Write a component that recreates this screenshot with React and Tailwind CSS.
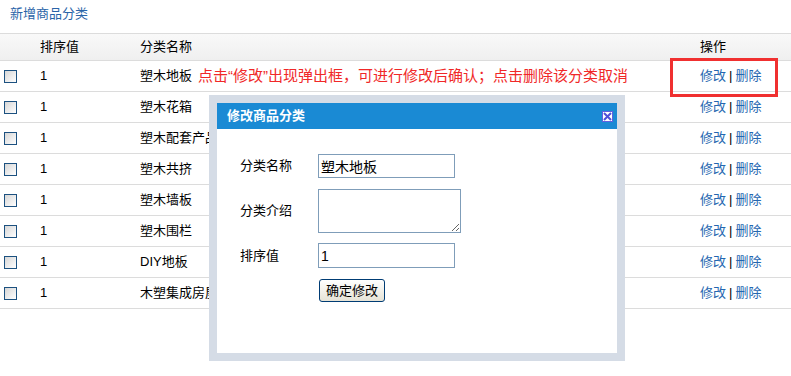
import React from "react";

const rows = ["塑木地板", "塑木花箱", "塑木配套产品", "塑木共挤", "塑木墙板", "塑木围栏", "DIY地板", "木塑集成房屋"];

function Checkbox() {
  return <div className="w-[13px] h-[13px] border border-[#1c5180] bg-gradient-to-br from-[#d6d6d6] to-white" />;
}

export default function App() {
  const font = { fontFamily: '"Liberation Sans", "Noto Sans CJK SC", sans-serif' };
  return (
    <div className="relative w-[791px] h-[376px] bg-white overflow-hidden text-[13px] text-black" style={font}>
      <div className="h-[33px] pl-[10px] pt-[5px] leading-[18px] text-[#2a64a8]">新增商品分类</div>
      <div className="h-[28px] flex items-center border-t border-b border-[#dcdcdc] bg-gradient-to-b from-[#f9f9f9] to-[#efefef]">
        <div className="w-[40px]" />
        <div className="w-[100px]">排序值</div>
        <div className="flex-1">分类名称</div>
        <div className="w-[91px]">操作</div>
      </div>
      {rows.map((name, i) => (
        <div key={i} className="h-[31px] flex items-center border-b border-[#dcdcdc]">
          <div className="w-[40px] pl-[4px]"><Checkbox /></div>
          <div className="w-[100px]">1</div>
          <div className="flex-1 flex items-center whitespace-nowrap">
            <span>{name}</span>
            {i === 0 && (
              <span className="ml-[6px] text-[15px] text-[#f02828]">点击“修改”出现弹出框，可进行修改后确认；点击删除该分类取消</span>
            )}
          </div>
          <div className="w-[91px] flex items-center text-[#2466b0]">
            <span>修改</span>
            <span className="mx-[3px] text-black">|</span>
            <span>删除</span>
          </div>
        </div>
      ))}

      <div className="absolute left-[670px] top-[58px] w-[108px] h-[39px] border-[3px] border-[#f03030]" />

      <div className="absolute left-[209px] top-[95px] w-[416px] h-[266px] border-[8px] border-[#d5dce6] bg-white flex flex-col">
        <div className="h-[26px] bg-[#1a8ad4] flex items-center justify-between pl-[10px] pr-[4px]">
          <span className="text-white font-bold text-[13px]">修改商品分类</span>
          <div className="w-[11px] h-[11px] bg-white border border-[#6060e0] flex items-center justify-center">
            <svg width="9" height="9" viewBox="0 0 9 9">
              <path d="M1 1 L8 8 M8 1 L1 8" stroke="#5050d8" strokeWidth="2" />
            </svg>
          </div>
        </div>
        <div className="pl-[23px] pt-[25px] flex flex-col">
          <div className="flex items-center h-[24px]">
            <div className="w-[78px]">分类名称</div>
            <input defaultValue="塑木地板" className="w-[137px] h-[24px] border border-[#7f9db9] px-[2px] text-[14px] outline-none" style={font} />
          </div>
          <div className="flex items-center mt-[11px]">
            <div className="w-[78px]">分类介绍</div>
            <textarea className="w-[143px] h-[44px] border border-[#7f9db9] outline-none" />
          </div>
          <div className="flex items-center h-[25px] mt-[10px]">
            <div className="w-[78px]">排序值</div>
            <input defaultValue="1" className="w-[137px] h-[25px] border border-[#7f9db9] px-[2px] text-[14px] outline-none" style={font} />
          </div>
          <div className="flex mt-[11px] pl-[79px]">
            <button className="w-[66px] h-[23px] rounded-[3px] border border-[#003c74] bg-gradient-to-b from-white to-[#e6e3d6] text-[13px]" style={font}>确定修改</button>
          </div>
        </div>
      </div>
    </div>
  );
}
